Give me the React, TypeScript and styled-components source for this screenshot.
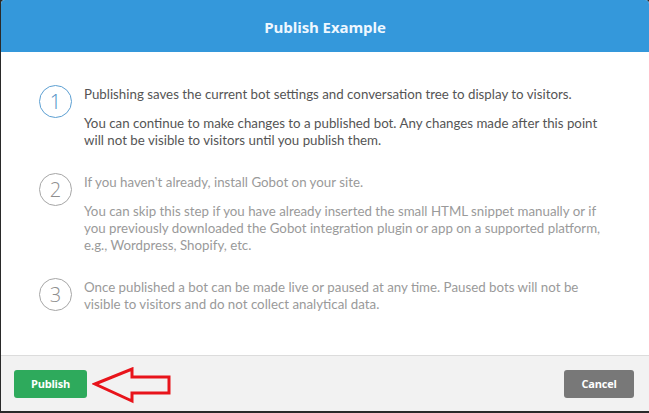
import styled, { createGlobalStyle } from "styled-components";

const GlobalStyle = createGlobalStyle`
  html, body {
    margin: 0;
    padding: 0;
    background: #2a2a2a;
  }
  body {
    font-family: Lato, "Liberation Sans", sans-serif;
  }
`;

type Step = {
  num: number;
  active: boolean;
  paragraphs: string[][];
};

const steps: Step[] = [
  {
    num: 1,
    active: true,
    paragraphs: [
      ["Publishing saves the current bot settings and conversation tree to display to visitors."],
      [
        "You can continue to make changes to a published bot. Any changes made after this point",
        "will not be visible to visitors until you publish them.",
      ],
    ],
  },
  {
    num: 2,
    active: false,
    paragraphs: [
      ["If you haven't already, install Gobot on your site."],
      [
        "You can skip this step if you have already inserted the small HTML snippet manually or if",
        "you previously downloaded the Gobot integration plugin or app on a supported platform,",
        "e.g., Wordpress, Shopify, etc.",
      ],
    ],
  },
  {
    num: 3,
    active: false,
    paragraphs: [
      [
        "Once published a bot can be made live or paused at any time. Paused bots will not be",
        "visible to visitors and do not collect analytical data.",
      ],
    ],
  },
];

export default function App() {
  return (
    <>
      <GlobalStyle />
      <Modal>
        <Header>Publish Example</Header>
        <Body>
          {steps.map((step) => (
            <StepRow key={step.num}>
              <Circle $active={step.active}>{step.num}</Circle>
              <StepText $active={step.active}>
                {step.paragraphs.map((lines, i) => (
                  <Paragraph key={i}>
                    {lines.map((line, j) => (
                      <span key={j}>
                        {line}
                        {j < lines.length - 1 && <br />}
                      </span>
                    ))}
                  </Paragraph>
                ))}
              </StepText>
            </StepRow>
          ))}
        </Body>
        <Footer>
          <PublishButton>Publish</PublishButton>
          <Arrow width="90" height="40" viewBox="0 0 90 40">
            <polygon
              points="3,17 40,2 40,10 77,10 77,26 40,26 40,34"
              fill="none"
              stroke="#e8141b"
              strokeWidth="3"
              strokeLinejoin="miter"
            />
          </Arrow>
          <CancelButton>Cancel</CancelButton>
        </Footer>
      </Modal>
    </>
  );
}

const Modal = styled.div`
  margin-left: 1px;
  width: 648px;
  height: 411px;
  background: #ffffff;
  border-radius: 4px 4px 0 0;
  overflow: hidden;
  display: flex;
  flex-direction: column;
`;

const Header = styled.div`
  height: 52px;
  flex-shrink: 0;
  background: #3498db;
  color: #eef7ff;
  display: flex;
  align-items: center;
  justify-content: center;
  font-family: "Open Sans", "Liberation Sans", sans-serif;
  font-weight: 700;
  font-size: 15px;
  letter-spacing: -0.1px;
  padding-top: 2px;
  box-sizing: border-box;
`;

const Body = styled.div`
  flex: 1;
  padding: 34px 20px 0 38px;
  display: flex;
  flex-direction: column;
  gap: 13px;
`;

const StepRow = styled.div`
  display: flex;
  align-items: flex-start;
  gap: 12px;
`;

const Circle = styled.div<{ $active: boolean }>`
  width: 31px;
  height: 31px;
  flex-shrink: 0;
  margin-top: -1px;
  border-radius: 50%;
  border: 1px solid ${(p) => (p.$active ? "#5c9fd2" : "#a6a6a6")};
  color: ${(p) => (p.$active ? "#4a8cc4" : "#8e8e8e")};
  display: flex;
  align-items: center;
  justify-content: center;
  font-family: "Open Sans", "Liberation Sans", sans-serif;
  font-weight: 300;
  font-size: 20px;
`;

const StepText = styled.div<{ $active: boolean }>`
  color: ${(p) => (p.$active ? "#555555" : "#9a9a9a")};
  font-size: 13.3px;
  line-height: 17px;
  white-space: nowrap;
`;

const Paragraph = styled.p`
  margin: 0 0 12px;
`;

const Footer = styled.div`
  position: relative;
  height: 55px;
  flex-shrink: 0;
  background: #f2f2f2;
  border-top: 1px solid #dcdcdc;
  display: flex;
  align-items: center;
  justify-content: space-between;
  padding: 0 15px 0 13px;
`;

const FooterButton = styled.button`
  height: 28px;
  border: none;
  border-radius: 3px;
  color: #ffffff;
  font-family: "Open Sans", "Liberation Sans", sans-serif;
  font-weight: 700;
  font-size: 11px;
  letter-spacing: -0.2px;
  cursor: pointer;
`;

const PublishButton = styled(FooterButton)`
  width: 73px;
  background: #2eaa5c;
`;

const CancelButton = styled(FooterButton)`
  width: 70px;
  background: #787878;
`;

const Arrow = styled.svg`
  position: absolute;
  left: 91px;
  top: 11px;
`;
